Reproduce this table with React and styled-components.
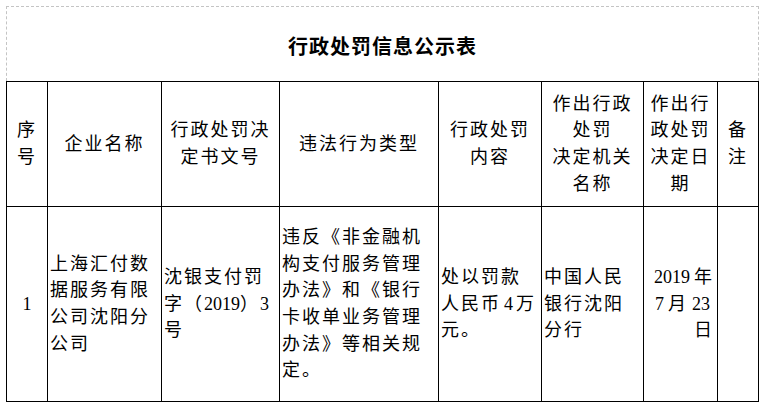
import React from "react";
import styled, { createGlobalStyle } from "styled-components";

const GlobalStyle = createGlobalStyle`
  html, body {
    margin: 0;
    padding: 0;
    background: #fff;
  }
  body {
    font-family: "Liberation Serif", "Noto Sans CJK SC", serif;
    color: #000;
  }
`;

const Page = styled.div`
  padding: 6px 0 0 6px;
  width: 753px;
`;

const TitleBox = styled.div`
  box-sizing: border-box;
  height: 75px;
  border: 1px dashed #c4c4c4;
  border-bottom: none;
  display: flex;
  align-items: center;
  justify-content: center;
`;

const Title = styled.h1`
  margin: 0;
  padding-top: 2px;
  font-family: "Noto Sans CJK SC", sans-serif;
  font-size: 20px;
  font-weight: 700;
  letter-spacing: 1px;
`;

const Table = styled.div`
  display: grid;
  grid-template-columns: 41px 114px 118px 159px 103px 102px 74px 41px;
  grid-template-rows: 125px 195px;
  border-left: 1px solid #000;
  border-top: 1px solid #000;
`;

const Cell = styled.div`
  box-sizing: border-box;
  border-right: 1px solid #000;
  border-bottom: 1px solid #000;
  display: flex;
  align-items: center;
  justify-content: ${(p) =>
    p.$align === "left" ? "flex-start" : p.$align === "right" ? "flex-end" : "center"};
  padding: ${(p) => (p.$align === "left" ? "0 0 0 2px" : p.$align === "right" ? "0 3px 0 0" : "0")};
  font-size: 18px;
  line-height: 26.67px;
  letter-spacing: 2px;
  text-align: ${(p) => p.$align || "center"};
  white-space: nowrap;
`;

const Line = styled.span`
  display: block;
`;

const Num = styled.span`
  display: inline-block;
  letter-spacing: 0;
  margin: 0 ${(p) => p.$gap || 0}px;
`;

const Lines = ({ lines }) => (
  <div>
    {lines.map((l, i) => (
      <Line key={i}>{l}</Line>
    ))}
  </div>
);

const header = [
  ["序", "号"],
  ["企业名称"],
  ["行政处罚决", "定书文号"],
  ["违法行为类型"],
  ["行政处罚", "内容"],
  ["作出行政", "处罚", "决定机关", "名称"],
  ["作出行", "政处罚", "决定日", "期"],
  ["备", "注"],
];

const row = [
  { align: "center", lines: [<Num>1</Num>] },
  { align: "left", lines: ["上海汇付数", "据服务有限", "公司沈阳分", "公司"] },
  {
    align: "left",
    lines: [
      "沈银支付罚",
      <>
        字（<Num>2019</Num>）<Num>3</Num>
      </>,
      "号",
    ],
  },
  {
    align: "left",
    lines: ["违反《非金融机", "构支付服务管理", "办法》和《银行", "卡收单业务管理", "办法》等相关规", "定。"],
  },
  {
    align: "left",
    lines: [
      "处以罚款",
      <>
        人民币<Num $gap={3}>4</Num>万
      </>,
      "元。",
    ],
  },
  { align: "left", lines: ["中国人民", "银行沈阳", "分行"] },
  {
    align: "right",
    lines: [
      <>
        <Num $gap={4}>2019</Num>年
      </>,
      <>
        <Num $gap={4}>7</Num>月<Num $gap={4}>23</Num>
      </>,
      "日",
    ],
  },
  { align: "center", lines: [] },
];

export default function App() {
  return (
    <Page>
      <GlobalStyle />
      <TitleBox>
        <Title>行政处罚信息公示表</Title>
      </TitleBox>
      <Table>
        {header.map((lines, i) => (
          <Cell key={"h" + i}>
            <Lines lines={lines} />
          </Cell>
        ))}
        {row.map((c, i) => (
          <Cell key={"r" + i} $align={c.align}>
            <Lines lines={c.lines} />
          </Cell>
        ))}
      </Table>
    </Page>
  );
}
